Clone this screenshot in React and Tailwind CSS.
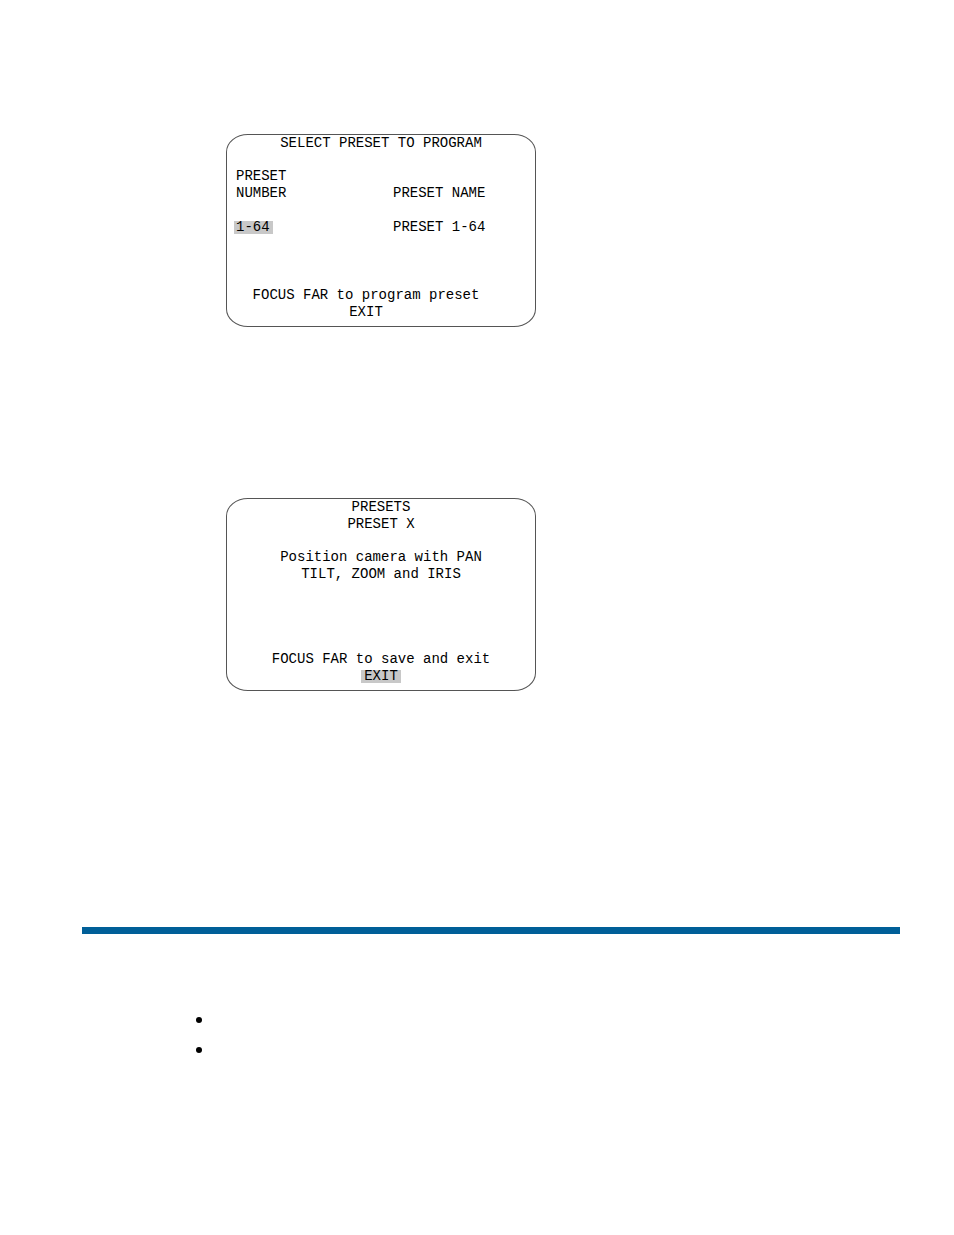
import React from "react";

const Screen = ({ label, children }) => (
    <section
        aria-label={label}
        className="w-full max-w-[310px] border border-[#555555] rounded-[22px/18px] pb-1 text-sm leading-[17px] text-black text-center"
    >
        {children}
    </section>
);

const SelectPresetScreen = () => (
    <Screen label="Select preset to program">
        <h2 className="mb-4">SELECT PRESET TO PROGRAM</h2>
        <table className="ml-[7px] text-left">
            <thead>
                <tr className="align-bottom">
                    <th className="w-[157px] p-0 pl-0.5 pb-[17px] font-normal">PRESET<br />NUMBER</th>
                    <th className="p-0 pl-0.5 pb-[17px] font-normal">PRESET NAME</th>
                </tr>
            </thead>
            <tbody>
                <tr>
                    <td className="p-0">
                        <span className="block w-fit my-0.5 pl-0.5 pr-[3px] leading-[13px] bg-[#c8c8c8]">1-64</span>
                    </td>
                    <td className="p-0 pl-0.5">PRESET 1-64</td>
                </tr>
            </tbody>
        </table>
        <div className="mt-[51px] mb-px pr-[30px]">
            <p>FOCUS FAR to program preset</p>
            <button type="button" className="block mx-auto">EXIT</button>
        </div>
    </Screen>
);

const PositionPresetScreen = () => (
    <Screen label="Presets">
        <h2>PRESETS</h2>
        <p>PRESET X</p>
        <p className="mt-4">Position camera with PAN<br />TILT, ZOOM and IRIS</p>
        <p className="mt-[68px]">FOCUS FAR to save and exit</p>
        <button type="button" className="block mx-auto mt-0.5 mb-[3px] px-[3px] leading-[13px] bg-[#c8c8c8]">EXIT</button>
    </Screen>
);

const App = () => {
    return (
        <main className="min-h-screen bg-white pt-[134px] pb-44 pl-[82px] pr-[54px] font-['Liberation_Mono',monospace]">
            <div className="flex flex-col gap-[171px] pl-36">
                <SelectPresetScreen />
                <PositionPresetScreen />
            </div>

            <hr className="mt-[236px] h-[7px] border-0 bg-[#005f98]" />

            <ul className="mt-[83px] pl-[114px] flex flex-col gap-6">
                <li className="size-1.5 rounded-full bg-black"></li>
                <li className="size-1.5 rounded-full bg-black"></li>
            </ul>
        </main>
    );
};

export default App;
